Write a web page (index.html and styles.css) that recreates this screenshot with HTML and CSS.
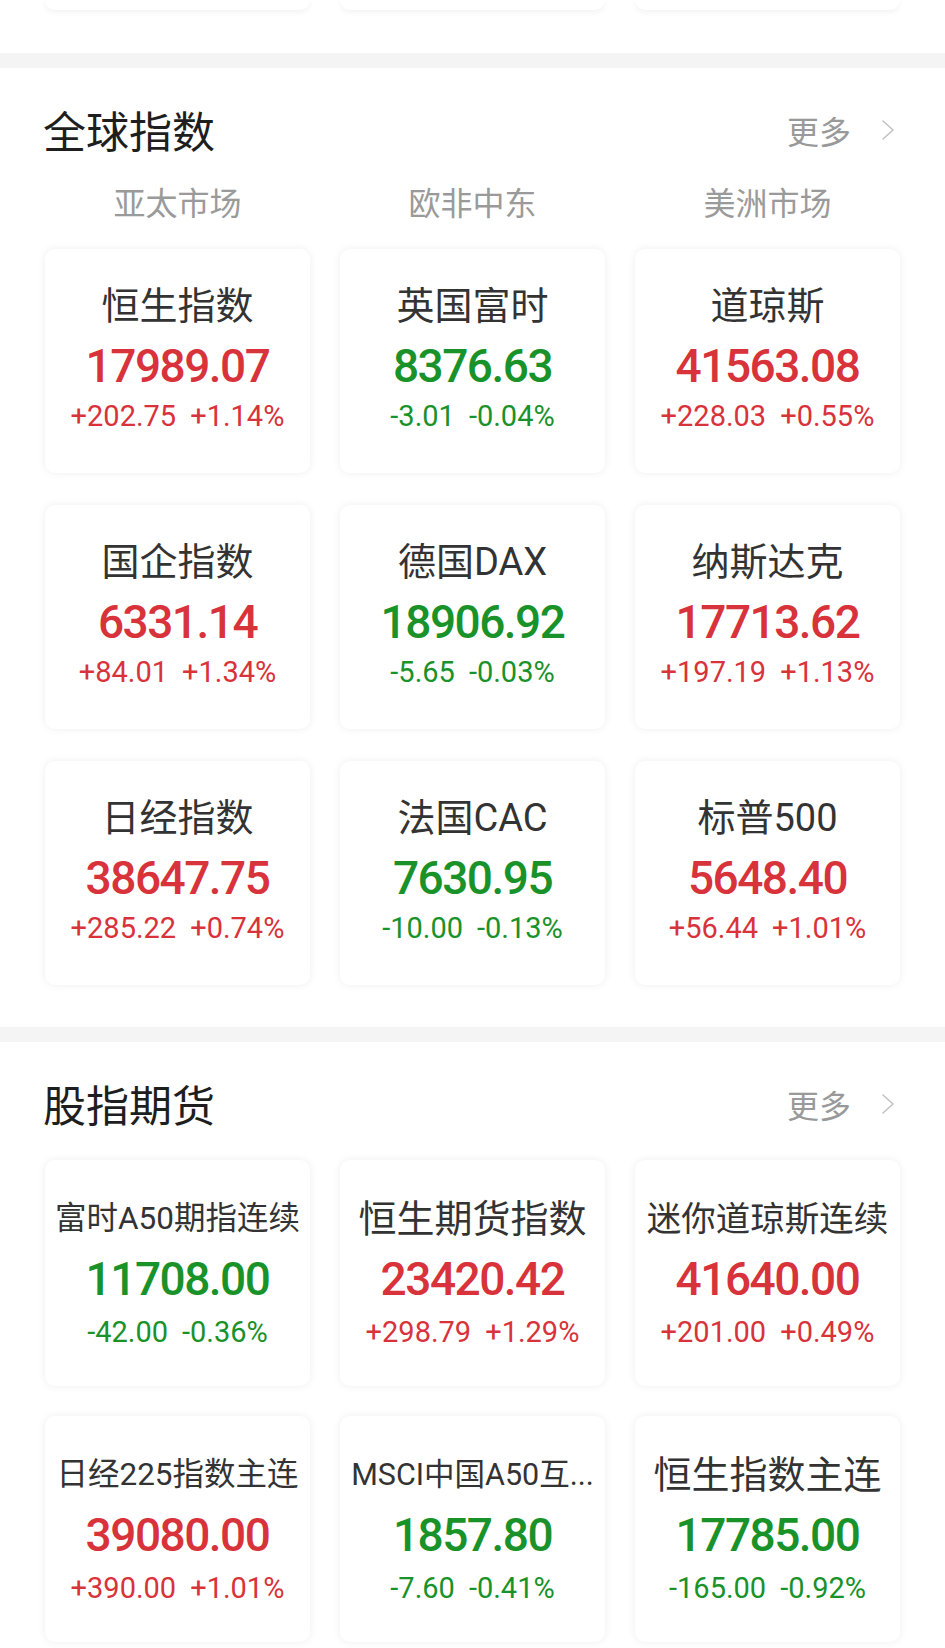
FILE: index.html
```html
<!DOCTYPE html>
<html lang="zh-CN">
<head>
  <meta charset="UTF-8" />
  <meta name="viewport" content="width=device-width, initial-scale=1" />
  <title>行情</title>
  <link rel="stylesheet" href="styles.css">
</head>
<body>
  <div class="page">
    <!-- bagian atas yang terpotong -->
    <div class="stubs">
      <div class="stub"></div>
      <div class="stub"></div>
      <div class="stub"></div>
    </div>

    <div class="divider"></div>

    <!-- 全球指数 -->
    <section class="block">
      <div class="block-head">
        <h2 class="block-title">全球指数</h2>
        <a class="more" href="#">更多
          <svg width="14" height="22" viewBox="0 0 14 22"><polyline points="2,2 12,11 2,20" fill="none" stroke="#c2c2c2" stroke-width="1.6" stroke-linecap="round" stroke-linejoin="round"/></svg>
        </a>
      </div>
      <div class="tabs">
        <span>亚太市场</span>
        <span>欧非中东</span>
        <span>美洲市场</span>
      </div>
      <div class="quotes">
        <div class="quote up">
          <div class="quote-name">恒生指数</div>
          <div class="quote-price">17989.07</div>
          <div class="quote-change"><span>+202.75</span><span>+1.14%</span></div>
        </div>
        <div class="quote down">
          <div class="quote-name">英国富时</div>
          <div class="quote-price">8376.63</div>
          <div class="quote-change"><span>-3.01</span><span>-0.04%</span></div>
        </div>
        <div class="quote up">
          <div class="quote-name">道琼斯</div>
          <div class="quote-price">41563.08</div>
          <div class="quote-change"><span>+228.03</span><span>+0.55%</span></div>
        </div>
        <div class="quote up">
          <div class="quote-name">国企指数</div>
          <div class="quote-price">6331.14</div>
          <div class="quote-change"><span>+84.01</span><span>+1.34%</span></div>
        </div>
        <div class="quote down">
          <div class="quote-name">德国DAX</div>
          <div class="quote-price">18906.92</div>
          <div class="quote-change"><span>-5.65</span><span>-0.03%</span></div>
        </div>
        <div class="quote up">
          <div class="quote-name">纳斯达克</div>
          <div class="quote-price">17713.62</div>
          <div class="quote-change"><span>+197.19</span><span>+1.13%</span></div>
        </div>
        <div class="quote up">
          <div class="quote-name">日经指数</div>
          <div class="quote-price">38647.75</div>
          <div class="quote-change"><span>+285.22</span><span>+0.74%</span></div>
        </div>
        <div class="quote down">
          <div class="quote-name">法国CAC</div>
          <div class="quote-price">7630.95</div>
          <div class="quote-change"><span>-10.00</span><span>-0.13%</span></div>
        </div>
        <div class="quote up">
          <div class="quote-name">标普500</div>
          <div class="quote-price">5648.40</div>
          <div class="quote-change"><span>+56.44</span><span>+1.01%</span></div>
        </div>
      </div>
    </section>

    <div class="divider"></div>

    <!-- 股指期货 -->
    <section class="block">
      <div class="block-head">
        <h2 class="block-title">股指期货</h2>
        <a class="more" href="#">更多
          <svg width="14" height="22" viewBox="0 0 14 22"><polyline points="2,2 12,11 2,20" fill="none" stroke="#c2c2c2" stroke-width="1.6" stroke-linecap="round" stroke-linejoin="round"/></svg>
        </a>
      </div>
      <div class="quotes quotes-futures">
        <div class="quote down">
          <div class="quote-name name-xs">富时A50期指连续</div>
          <div class="quote-price">11708.00</div>
          <div class="quote-change"><span>-42.00</span><span>-0.36%</span></div>
        </div>
        <div class="quote up">
          <div class="quote-name">恒生期货指数</div>
          <div class="quote-price">23420.42</div>
          <div class="quote-change"><span>+298.79</span><span>+1.29%</span></div>
        </div>
        <div class="quote up">
          <div class="quote-name name-sm">迷你道琼斯连续</div>
          <div class="quote-price">41640.00</div>
          <div class="quote-change"><span>+201.00</span><span>+0.49%</span></div>
        </div>
        <div class="quote up">
          <div class="quote-name name-xs">日经225指数主连</div>
          <div class="quote-price">39080.00</div>
          <div class="quote-change"><span>+390.00</span><span>+1.01%</span></div>
        </div>
        <div class="quote down">
          <div class="quote-name name-xxs">MSCI中国A50互...</div>
          <div class="quote-price">1857.80</div>
          <div class="quote-change"><span>-7.60</span><span>-0.41%</span></div>
        </div>
        <div class="quote down">
          <div class="quote-name">恒生指数主连</div>
          <div class="quote-price">17785.00</div>
          <div class="quote-change"><span>-165.00</span><span>-0.92%</span></div>
        </div>
      </div>
    </section>
  </div>
</body>
</html>
```

FILE: styles.css
```css
body {
  margin: 0;
  background: #fff;
  font-family: 'Noto Sans CJK SC', 'Noto Sans', sans-serif;
  color: #222;
}

.page {
  width: 945px;
}

/* potongan kartu di atas */
.stubs {
  display: grid;
  grid-template-columns: repeat(3, 1fr);
  column-gap: 30px;
  padding: 0 45px;
  margin-bottom: 43px;
}

.stub {
  height: 10px;
  background: #fff;
  border-radius: 0 0 10px 10px;
  box-shadow: 0 2px 6px rgba(0, 0, 0, 0.06);
}

.divider {
  height: 15px;
  background: #f4f4f4;
}

.block {
  padding: 40px 45px 42px 45px;
}

.block-head {
  display: flex;
  justify-content: space-between;
  align-items: center;
}

.block-title {
  margin: 0 0 0 -2px;
  font-size: 43px;
  line-height: 43px;
  font-weight: 400;
  color: #1e1e1e;
}

.more {
  display: flex;
  align-items: center;
  gap: 30px;
  margin-right: 5px;
  font-size: 32px;
  line-height: 32px;
  color: #999;
  text-decoration: none;
}

.tabs {
  display: grid;
  grid-template-columns: repeat(3, 1fr);
  column-gap: 30px;
  margin-top: 34px;
  text-align: center;
  font-size: 32px;
  line-height: 32px;
  color: #9a9a9a;
}

.quotes {
  display: grid;
  grid-template-columns: repeat(3, 1fr);
  column-gap: 30px;
  row-gap: 32px;
  margin-top: 32px;
}

.quote {
  height: 224px;
  box-sizing: border-box;
  padding-top: 38px;
  background: #fff;
  border-radius: 10px;
  box-shadow: 0 0 9px rgba(0, 0, 0, 0.07);
  display: flex;
  flex-direction: column;
  align-items: center;
}

.quotes-futures {
  margin-top: 35px;
  row-gap: 30px;
}

.quotes-futures .quote {
  height: 226px;
  padding-top: 40px;
}

.quotes-futures .quote-change {
  margin-top: 16px;
}

.quote-name {
  height: 38px;
  line-height: 38px;
  font-family: Roboto, 'Noto Sans CJK SC', sans-serif;
  font-size: 38px;
  color: #333;
  white-space: nowrap;
}

.name-sm { font-size: 34.5px; }
.name-xs { font-size: 31.5px; }
.name-xxs { font-size: 30.5px; }

.quote-price {
  margin-top: 18px;
  font-family: Roboto, sans-serif;
  font-size: 46px;
  line-height: 46px;
  font-weight: 500;
  letter-spacing: -1.5px;
}

.quote-change {
  margin-top: 13px;
  display: flex;
  gap: 14px;
  font-family: Roboto, sans-serif;
  font-size: 29px;
  line-height: 29px;
}

.up { color: #d8323a; }
.down { color: #19922a; }
```
